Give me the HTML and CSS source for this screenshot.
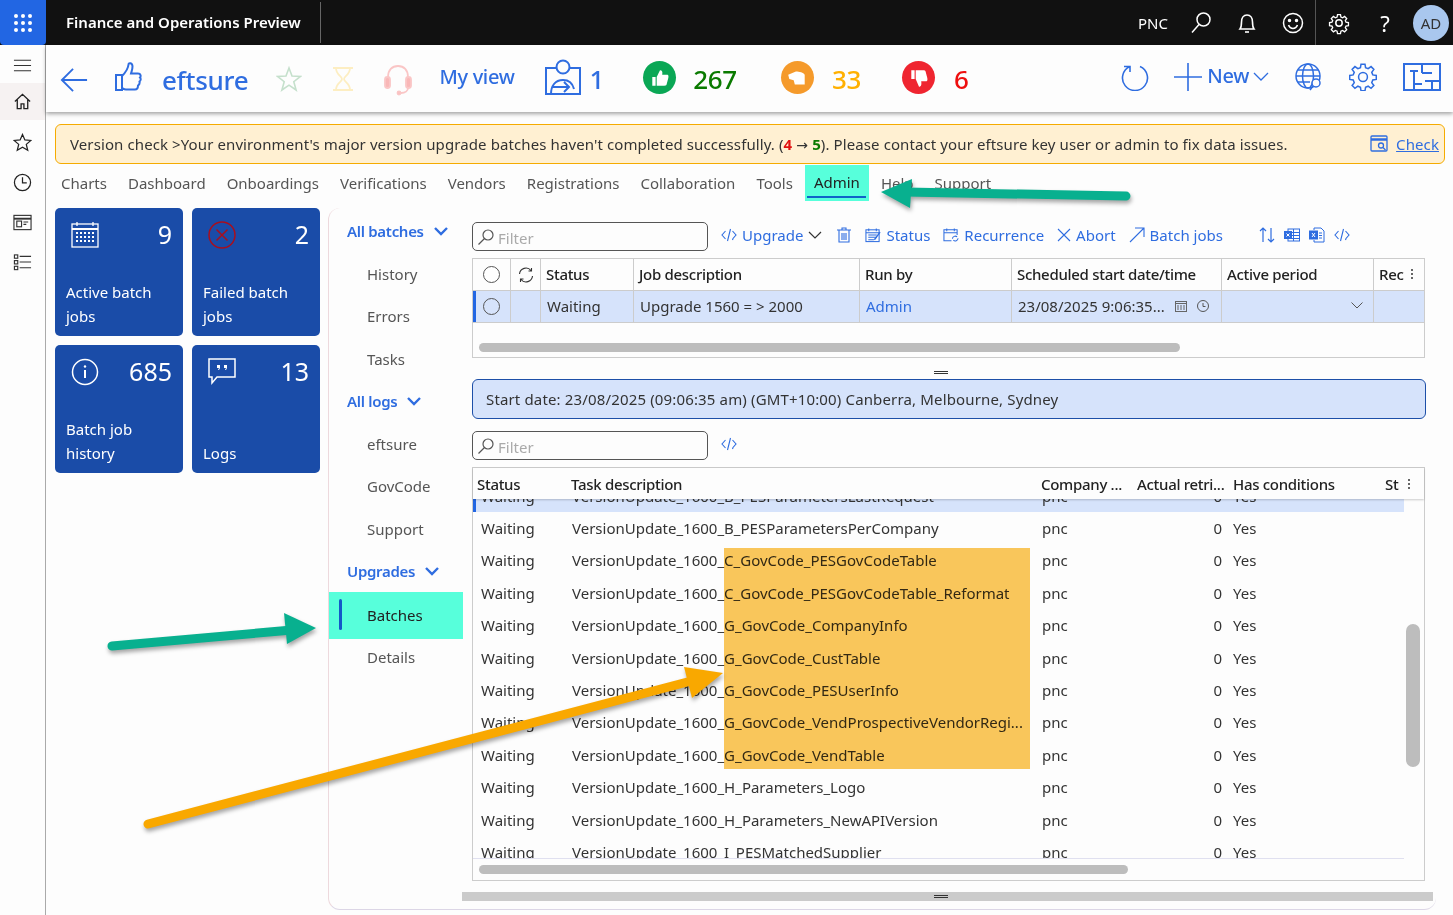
FILE: index.html
```html
<!DOCTYPE html>
<html>

	<head>
		<meta charset="UTF-8">
		<title>Finance and Operations Preview</title>
		<link rel="stylesheet" href="styles.css">
	</head>

	<body>
		<header class="topbar">
			<div class="waffle">
				<svg width="20" height="20" viewBox="0 0 20 20" fill="#fff"><circle cx="3" cy="3" r="2"/><circle cx="10" cy="3" r="2"/><circle cx="17" cy="3" r="2"/><circle cx="3" cy="10" r="2"/><circle cx="10" cy="10" r="2"/><circle cx="17" cy="10" r="2"/><circle cx="3" cy="17" r="2"/><circle cx="10" cy="17" r="2"/><circle cx="17" cy="17" r="2"/></svg>
			</div>
			<div class="app-title">Finance and Operations Preview</div>
			<div class="top-right">
				<span class="company">PNC</span>
				<svg class="top-icon" viewBox="0 0 24 24" fill="none" stroke="#fff" stroke-width="1.5"><circle cx="14.5" cy="8.5" r="6.5"/><path d="M10 13.5 3 21.5"/></svg>
				<svg class="top-icon" viewBox="0 0 24 24" fill="none" stroke="#fff" stroke-width="1.6"><path d="M5 18c1.500-2 1.500-4 1.500-7 0-4 2-7 5.500-7s5.500 3 5.500 7c0 3 0 5 1.500 7z"/><path d="M10 21h4"/></svg>
				<svg class="top-icon top-smile" viewBox="0 0 24 24" fill="none" stroke="#fff" stroke-width="1.5"><circle cx="12" cy="12" r="9.500"/><circle cx="8.500" cy="9.500" r="1" fill="#fff"/><circle cx="15.500" cy="9.500" r="1" fill="#fff"/><path d="M7.500 14c1 2.500 3 3.500 4.500 3.500s3.500-1 4.500-3.500"/></svg>
				<span class="top-sep"></span>
				<svg class="top-icon" viewBox="0 0 24 24" fill="none" stroke="#fff" stroke-width="1.5"><circle cx="12" cy="12" r="3.200"/><path d="M10.300 2.500h3.400l.5 2.800 1.900.8 2.300-1.600 2.400 2.400-1.600 2.300.8 1.900 2.800.5v3.400l-2.800.5-.8 1.900 1.600 2.300-2.400 2.400-2.300-1.600-1.900.8-.5 2.800h-3.400l-.5-2.800-1.900-.8-2.300 1.600-2.400-2.400 1.600-2.300-.8-1.900-2.800-.5v-3.400l2.800-.5.8-1.900-1.600-2.300 2.400-2.400 2.300 1.600 1.900-.8z" transform="translate(1.500 1.500) scale(.875)"/></svg>
				<span class="help">?</span>
				<span class="avatar">AD</span>
			</div>
		</header>

		<div class="shell">
			<aside class="rail">
				<svg class="rail-icon" viewBox="0 0 20 20" stroke="#333" stroke-width="1.200"><path d="M1 4.500h18M1 10h18M1 15.500h18"/></svg>
				<div class="rail-home">
					<svg class="rail-icon" viewBox="0 0 20 20" fill="none" stroke="#222" stroke-width="1.400"><path d="M2 10 10 2.500 18 10M4.500 8v9.500h4v-5h3v5h4V8"/></svg>
				</div>
				<svg class="rail-icon" viewBox="0 0 20 20" fill="none" stroke="#222" stroke-width="1.300"><path d="m10 1.500 2.500 5.800 6.300.6-4.800 4.100 1.500 6.200-5.500-3.300-5.500 3.300 1.500-6.200L1.200 7.900l6.300-.6z"/></svg>
				<svg class="rail-icon" viewBox="0 0 20 20" fill="none" stroke="#222" stroke-width="1.300"><circle cx="10" cy="10" r="8.500"/><path d="M10 4.500V10.500H14.500"/></svg>
				<svg class="rail-icon" viewBox="0 0 20 20" fill="none" stroke="#333" stroke-width="1.200"><rect x="1" y="2.500" width="18" height="15"/><path d="M1 6h18" stroke-width="2"/><rect x="4" y="8.500" width="5" height="6"/><path d="M11 9.500h5M11 12h3"/></svg>
				<svg class="rail-icon" viewBox="0 0 20 20" fill="none" stroke="#333" stroke-width="1.200"><rect x="1.500" y="2" width="3.500" height="3.500"/><rect x="1.500" y="8" width="3.500" height="3.500"/><rect x="1.500" y="14" width="3.500" height="3.500"/><path d="M7 3.500h12M7 9.500h12M7 15.500h12"/></svg>
			</aside>

			<main class="main">
				<div class="actionbar">
					<svg class="back" viewBox="0 0 30 28" fill="none" stroke="#2f6de0" stroke-width="2"><path d="M29 14H2M14 2 2 14l12 12"/></svg>
					<svg class="thumb" viewBox="0 0 28 30" fill="none" stroke="#2f6de0" stroke-width="2"><path d="M2 13h6v15H2zM8 14c3-3 6-6 6.500-11.500 0-2 4-2 4 2 0 3-1 5-1.500 7h7c3 0 3 3 2 4 1 1 1 3-.5 4 .5 2 0 3-1.500 4 0 2-1 4-3 4H12c-2 0-3-1-4-1.500"/></svg>
					<span class="brand">eftsure</span>
					<svg class="fav" viewBox="0 0 26 26" fill="none" stroke="#c5e0cc" stroke-width="1.600"><path d="m13 2 3 8 8.500.4-6.700 5.300 2.300 8.300-7.100-4.800L5.900 24l2.300-8.300-6.700-5.300L10 10z"/></svg>
					<svg class="hour" viewBox="0 0 22 26" fill="none" stroke="#fdeec2" stroke-width="1.800"><path d="M1 2h20M1 24h20M4 2c0 7 6 8 6 11s-6 4-6 11M18 2c0 7-6 8-6 11s6 4 6 11"/></svg>
					<svg class="head" viewBox="0 0 30 32" fill="none" stroke="#fac6c6" stroke-width="1.800"><path d="M5 16V13C5 6 9 2 15 2s10 4 10 11v3"/><rect x="2" y="13" width="5" height="11" rx="2.500" fill="#f9b7b7"/><rect x="23" y="13" width="5" height="11" rx="2.500" fill="#f9b7b7"/><path d="M25 24c0 3-3 5-7 5"/><circle cx="16" cy="29" r="1.500" fill="#f9b7b7"/></svg>
					<span class="myview">My view</span>
					<svg class="assign" viewBox="0 0 36 36" fill="none" stroke="#2f6de0" stroke-width="2"><rect x="1" y="9" width="34" height="26"/><circle cx="18" cy="8" r="6.500" fill="#fdfdfd"/><path d="M6 35c0-8 4-14 12-14s10 5 11 9M8 28h16m-5-5 5 5-5 5"/></svg>
					<span class="count count-blue">1</span>
					<span class="dot dot-green"><svg viewBox="0 0 20 20" fill="#fff"><path d="M3 9h3v8H3zM7 9l3-6c2 0 2.500 1.500 2 4h4.500c1.500 0 1.500 2 .5 5l-1 4c-.5 1-1 1-2 1H7z"/></svg></span>
					<span class="count count-green">267</span>
					<span class="dot dot-orange"><svg viewBox="0 0 20 20" fill="#fff"><path d="M2 7l7-3c3 0 7 1 8 3v9H8l-1-4-4-1z"/></svg></span>
					<span class="count count-orange">33</span>
					<span class="dot dot-red"><svg viewBox="0 0 20 20" fill="#fff"><path d="M3 3h3v8H3zM7 3v8l3 7c2 0 2.500-2 2-5h4.500c1.500 0 1.500-2 .5-5l-1-4c-.5-1-1-1-2-1z"/></svg></span>
					<span class="count count-red">6</span>
					<div class="action-right">
						<svg class="act-refresh" viewBox="0 0 28 28" fill="none" stroke="#2f6de0" stroke-width="1.600"><path d="M9 3.500a12.500 12.500 0 1 0 10 0M9 9V3.500H3"/></svg>
						<svg class="act-plus" viewBox="0 0 28 28" stroke="#2f6de0" stroke-width="1.600"><path d="M14 0v28M0 14h28"/></svg>
						<span class="new-label">New</span>
						<svg class="act-chev" viewBox="0 0 16 10" fill="none" stroke="#2f6de0" stroke-width="1.300"><path d="m1 1 7 7 7-7"/></svg>
						<svg class="act-globe" viewBox="0 0 28 28" fill="none" stroke="#2f6de0" stroke-width="1.500"><circle cx="13" cy="13" r="12"/><ellipse cx="13" cy="13" rx="5.500" ry="12"/><path d="M1 13h24M3 7h20M3 19h12"/><circle cx="21" cy="20" r="4" fill="#fdfdfd"/><path d="m18 23-3 4"/></svg>
						<svg class="act-gear" viewBox="0 0 24 24" fill="none" stroke="#2f6de0" stroke-width="1.300"><circle cx="12" cy="12" r="3.800"/><path d="M10.300 1h3.400l.5 3 2.200.9 2.500-1.800 2.400 2.400-1.800 2.500.9 2.200 3 .5v3.400l-3 .5-.9 2.200 1.800 2.500-2.400 2.400-2.500-1.800-2.200.9-.5 3h-3.400l-.5-3-2.200-.9-2.500 1.800-2.400-2.400 1.800-2.500-.9-2.200-3-.5v-3.400l3-.5.9-2.200-1.800-2.500 2.400-2.400 2.500 1.800 2.200-.9z"/></svg>
						<svg class="act-plan" viewBox="0 0 38 28" fill="none" stroke="#2f6de0" stroke-width="2"><rect x="1" y="1" width="36" height="26"/><path d="M7 8h8M11 8v19M19 1v9M19 10h10M22 18h15M29 18v9M19 21h-8" /></svg>
					</div>
				</div>

				<div class="banner">
					<span>Version check &gt;Your environment's major version upgrade batches haven't completed successfully. (<b class="v-red">4</b> <span class="v-arrow">→</span> <b class="v-green">5</b>). Please contact your eftsure key user or admin to fix data issues.</span>
					<span class="check">
						<svg width="18" height="18" viewBox="0 0 18 18" fill="none" stroke="#2f6de0" stroke-width="1.300"><rect x="1" y="1" width="16" height="15" rx="1"/><path d="M1 4.500h16" stroke-width="2.500"/><circle cx="11" cy="10.500" r="2.500"/><path d="m13 12.500 2.500 2.500"/></svg>
						<a class="check-link" href="javascript:;">Check</a>
					</span>
				</div>

				<nav class="tabs">
					<a href="javascript:;">Charts</a>
					<a href="javascript:;">Dashboard</a>
					<a href="javascript:;">Onboardings</a>
					<a href="javascript:;">Verifications</a>
					<a href="javascript:;">Vendors</a>
					<a href="javascript:;">Registrations</a>
					<a href="javascript:;">Collaboration</a>
					<a href="javascript:;">Tools</a>
					<a class="active" href="javascript:;">Admin</a>
					<a href="javascript:;">Help</a>
					<a href="javascript:;">Support</a>
				</nav>

				<div class="content">
					<div class="tiles">
						<div class="tile">
							<div class="tile-top">
								<svg class="tile-icon" viewBox="0 0 28 28" fill="none" stroke="#fff" stroke-width="1.300"><rect x="1" y="3" width="26" height="23"/><path d="M1 8h26" stroke-width="2"/><path d="M6 1v4M22 1v4"/><path d="M5 12h18M5 16h18M5 20h18" stroke-width="2" stroke-dasharray="2 2"/></svg>
								<span class="tile-num">9</span>
							</div>
							<div class="tile-label">Active batch jobs</div>
						</div>
						<div class="tile">
							<div class="tile-top">
								<svg class="tile-icon" viewBox="0 0 28 28" fill="none" stroke="#a80f1e" stroke-width="1.500"><circle cx="14" cy="14" r="13"/><path d="m8.500 8.500 11 11m0-11-11 11"/></svg>
								<span class="tile-num">2</span>
							</div>
							<div class="tile-label">Failed batch jobs</div>
						</div>
						<div class="tile">
							<div class="tile-top">
								<svg class="tile-icon" viewBox="0 0 28 28" fill="none" stroke="#fff" stroke-width="1.500"><circle cx="14" cy="14" r="12.500"/><path d="M14 12v8" stroke-width="2"/><circle cx="14" cy="8.500" r="1.200" fill="#fff" stroke="none"/></svg>
								<span class="tile-num">685</span>
							</div>
							<div class="tile-label">Batch job history</div>
						</div>
						<div class="tile">
							<div class="tile-top">
								<svg class="tile-icon" viewBox="0 0 28 28" fill="none" stroke="#fff" stroke-width="1.500"><path d="M1 1h26v18H9l-5 6v-6H1z"/><path d="M9 7h3v3l-1 2H10l1-2H9zM16 7h3v3l-1 2h-1l1-2h-2z" fill="#fff" stroke="none"/></svg>
								<span class="tile-num">13</span>
							</div>
							<div class="tile-label">Logs</div>
						</div>
					</div>

					<section class="panel">
						<ul class="side-nav">
							<li class="group">All batches <svg class="nav-chev" viewBox="0 0 14 9" fill="none" stroke="#2f6de0" stroke-width="2.400"><path d="m1 1 6 6 6-6"/></svg></li>
							<li>History</li>
							<li>Errors</li>
							<li>Tasks</li>
							<li class="group">All logs <svg class="nav-chev" viewBox="0 0 14 9" fill="none" stroke="#2f6de0" stroke-width="2.400"><path d="m1 1 6 6 6-6"/></svg></li>
							<li>eftsure</li>
							<li>GovCode</li>
							<li>Support</li>
							<li class="group">Upgrades <svg class="nav-chev" viewBox="0 0 14 9" fill="none" stroke="#2f6de0" stroke-width="2.400"><path d="m1 1 6 6 6-6"/></svg></li>
							<li class="current">Batches</li>
							<li>Details</li>
						</ul>

						<div class="work">
							<div class="toolbar">
								<div class="filter">
									<svg width="18" height="18" viewBox="0 0 18 18" fill="none" stroke="#555" stroke-width="1.200"><circle cx="11" cy="7" r="5"/><path d="m7.500 10.500-6 6"/></svg>
									<span>Filter</span>
								</div>
								<span class="tool tool-first"><svg class="code" viewBox="0 0 16 14" fill="none" stroke="#2f6de0" stroke-width="1.100"><path d="M4.500 3 1 7l3.500 4M9.500 1 6.500 13M11.500 3 15 7l-3 3.500-.5 1.500"/></svg>Upgrade<svg class="chev" viewBox="0 0 14 8" fill="none" stroke="#333" stroke-width="1.200"><path d="m1 1 6 6 6-6"/></svg></span>
								<svg class="tool-icon trash" viewBox="0 0 14 16" fill="none" stroke="#2f6de0" stroke-width="1.100"><path d="M0 3h14M5 3V1h4v2M2 3v12h10V3M5 6v7M7 6v7M9 6v7"/></svg>
								<span class="tool"><svg class="tool-icon" viewBox="0 0 17 16" fill="none" stroke="#2f6de0" stroke-width="1.100"><rect x="1" y="2.500" width="14" height="12.500"/><path d="M1 5.500h14M4 1v3M12 1v3M3.500 8h9M3.500 10.500h9M3.500 13h6"/><path d="m16 5-6 8" stroke-width="1.500"/></svg>Status</span>
								<span class="tool"><svg class="tool-icon" viewBox="0 0 17 16" fill="none" stroke="#2f6de0" stroke-width="1.100"><path d="M9 14H1V2.500h14V8M1 5.500h14M4 1v3M12 1v3"/><path d="M10 12a3 3 0 0 1 5-2m1 1.500a3 3 0 0 1-5 2"/></svg>Recurrence</span>
								<span class="tool"><svg class="tool-icon x" viewBox="0 0 14 14" stroke="#2f6de0" stroke-width="1.100"><path d="m1 1 12 12M13 1 1 13"/></svg>Abort</span>
								<span class="tool"><svg class="tool-icon" viewBox="0 0 16 16" fill="none" stroke="#2f6de0" stroke-width="1.100"><path d="M1 15 15 1M6 1h9v9"/></svg>Batch jobs</span>
								<span class="tool-right">
									<svg class="tool-icon" viewBox="0 0 16 16" fill="none" stroke="#2f6de0" stroke-width="1.200"><path d="M4 15V1M1 4l3-3 3 3M12 1v14M9 12l3 3 3-3"/></svg>
									<svg class="tool-icon" viewBox="0 0 16 14" fill="none" stroke="#2f6de0" stroke-width="1"><rect x="4" y="1" width="11.500" height="12"/><path d="M4 4.500h11.500M4 7.500h11.500M4 10.500h11.500M9.500 1v12"/><rect x=".5" y="3.500" width="7" height="7" fill="#2f6de0"/><path d="m2.500 5.500 3 3m0-3-3 3" stroke="#fff"/></svg>
									<svg class="tool-icon" viewBox="0 0 16 16" fill="none" stroke="#2f6de0" stroke-width="1"><path d="M5 3V1h7l3 3v11H5v-2M10 6h3M10 8.500h3M10 11h3"/><rect x=".5" y="4" width="8" height="8" fill="#2f6de0"/><path d="m3 6 3 4m0-4-3 4" stroke="#fff"/></svg>
									<svg class="code" viewBox="0 0 16 14" fill="none" stroke="#2f6de0" stroke-width="1.100"><path d="M4.500 3 1 7l3.500 4M9.500 1 6.500 13M11.500 3 15 7l-3 3.500-.5 1.500"/></svg>
								</span>
							</div>

							<div class="jobs">
								<div class="job-row job-head">
									<div class="job-cell cell-center"><span class="radio"></span></div>
									<div class="job-cell cell-center"><svg width="16" height="16" viewBox="0 0 16 16" fill="none" stroke="#333" stroke-width="1.100"><path d="M1.500 7A6.500 6.500 0 0 1 13 3.500M14.500 9A6.500 6.500 0 0 1 3 12.500M13.500 1v3h-3M2.500 15v-3h3"/></svg></div>
									<div class="job-cell">Status</div>
									<div class="job-cell">Job description</div>
									<div class="job-cell">Run by</div>
									<div class="job-cell">Scheduled start date/time</div>
									<div class="job-cell">Active period</div>
									<div class="job-cell cell-last"><span class="cut">Rec</span><span class="kebab"></span></div>
								</div>
								<div class="job-row job-data">
									<div class="job-cell cell-center"><span class="radio"></span></div>
									<div class="job-cell"></div>
									<div class="job-cell">Waiting</div>
									<div class="job-cell">Upgrade 1560 = &gt; 2000</div>
									<div class="job-cell job-link">Admin</div>
									<div class="job-cell cell-date">23/08/2025 9:06:35...
										<svg width="12" height="12" viewBox="0 0 12 12" fill="none" stroke="#666" stroke-width="1"><rect x=".5" y="1.500" width="11" height="10"/><path d="M.5 3.500h11M3 5v5M6 5v5M9 5v5"/></svg>
										<svg width="12" height="12" viewBox="0 0 12 12" fill="none" stroke="#555" stroke-width="1"><circle cx="6" cy="6" r="5.500"/><path d="M6 3v3.500h2.500"/></svg>
									</div>
									<div class="job-cell cell-select"><svg width="12" height="7" viewBox="0 0 12 7" fill="none" stroke="#555" stroke-width="1"><path d="m.5.500 5.500 5.500 5.500-5.500"/></svg></div>
									<div class="job-cell"></div>
								</div>
								<div class="hscroll hscroll-top"><span class="thumb-h"></span></div>
							</div>

							<div class="splitter"><span></span></div>

							<div class="infobox">Start date: 23/08/2025 (09:06:35 am) (GMT+10:00) Canberra, Melbourne, Sydney</div>

							<div class="toolbar toolbar-low">
								<div class="filter">
									<svg width="18" height="18" viewBox="0 0 18 18" fill="none" stroke="#555" stroke-width="1.200"><circle cx="11" cy="7" r="5"/><path d="m7.500 10.500-6 6"/></svg>
									<span>Filter</span>
								</div>
								<span class="tool tool-first"><svg class="code" viewBox="0 0 16 14" fill="none" stroke="#2f6de0" stroke-width="1.100"><path d="M4.500 3 1 7l3.500 4M9.500 1 6.500 13M11.500 3 15 7l-3 3.500-.5 1.500"/></svg></span>
							</div>

							<div class="tasks">
								<div class="task-head">
									<div class="th-status">Status</div>
									<div>Task description</div>
									<div>Company ...</div>
									<div>Actual retri...</div>
									<div>Has conditions</div>
									<div class="th-last"><span class="cut">St</span><span class="kebab"></span></div>
								</div>
								<div class="task-body">
									<div class="task-clip">
										<div class="task-list">
											<div class="task selected"><span>Waiting</span><span class="task-name">VersionUpdate_1600_B_PESParametersLastRequest</span><span>pnc</span><span class="num">0</span><span class="yes">Yes</span></div>
											<div class="task"><span>Waiting</span><span class="task-name">VersionUpdate_1600_B_PESParametersPerCompany</span><span>pnc</span><span class="num">0</span><span class="yes">Yes</span></div>
											<div class="task"><span>Waiting</span><span class="task-name">VersionUpdate_1600_C_GovCode_PESGovCodeTable</span><span>pnc</span><span class="num">0</span><span class="yes">Yes</span></div>
											<div class="task"><span>Waiting</span><span class="task-name">VersionUpdate_1600_C_GovCode_PESGovCodeTable_Reformat</span><span>pnc</span><span class="num">0</span><span class="yes">Yes</span></div>
											<div class="task"><span>Waiting</span><span class="task-name">VersionUpdate_1600_G_GovCode_CompanyInfo</span><span>pnc</span><span class="num">0</span><span class="yes">Yes</span></div>
											<div class="task"><span>Waiting</span><span class="task-name">VersionUpdate_1600_G_GovCode_CustTable</span><span>pnc</span><span class="num">0</span><span class="yes">Yes</span></div>
											<div class="task"><span>Waiting</span><span class="task-name">VersionUpdate_1600_G_GovCode_PESUserInfo</span><span>pnc</span><span class="num">0</span><span class="yes">Yes</span></div>
											<div class="task"><span>Waiting</span><span class="task-name">VersionUpdate_1600_G_GovCode_VendProspectiveVendorRegi...</span><span>pnc</span><span class="num">0</span><span class="yes">Yes</span></div>
											<div class="task"><span>Waiting</span><span class="task-name">VersionUpdate_1600_G_GovCode_VendTable</span><span>pnc</span><span class="num">0</span><span class="yes">Yes</span></div>
											<div class="task"><span>Waiting</span><span class="task-name">VersionUpdate_1600_H_Parameters_Logo</span><span>pnc</span><span class="num">0</span><span class="yes">Yes</span></div>
											<div class="task"><span>Waiting</span><span class="task-name">VersionUpdate_1600_H_Parameters_NewAPIVersion</span><span>pnc</span><span class="num">0</span><span class="yes">Yes</span></div>
											<div class="task"><span>Waiting</span><span class="task-name">VersionUpdate_1600_I_PESMatchedSupplier</span><span>pnc</span><span class="num">0</span><span class="yes">Yes</span></div>
										</div>
									</div>
									<div class="vscroll"><span class="thumb-v"></span></div>
								</div>
								<div class="hscroll hscroll-low"><span class="thumb-h"></span></div>
							</div>

							<div class="bottom-split"><span></span></div>
						</div>
					</section>
				</div>
			</main>
		</div>

		<!-- annotations drawn on top of the screenshot -->
		<div class="mark-orange"></div>
		<svg class="arrows" width="1453" height="915" viewBox="0 0 1453 915">
			<g class="arrow-teal">
				<path d="M1126 196 905 192" fill="none" stroke="#08b08f" stroke-width="9" stroke-linecap="round"/>
				<path d="M881 192 912 179 910 208z" fill="#08b08f"/>
			</g>
			<g class="arrow-teal">
				<path d="M112 646 292 630" fill="none" stroke="#08b08f" stroke-width="9" stroke-linecap="round"/>
				<path d="M316 628 284 613 287 644z" fill="#08b08f"/>
			</g>
			<g class="arrow-orange">
				<path d="M148 824 695 680" fill="none" stroke="#f9a800" stroke-width="9" stroke-linecap="round"/>
				<path d="M723 673 684 667 692 698z" fill="#f9a800"/>
			</g>
		</svg>
	</body>

</html>
```
FILE: styles.css
```css
html,
body {
	width: 100%;
	height: 100%;
	margin: 0;
	overflow: hidden;
}

body {
	background-color: #fdfdfd;
	font: 15px/20px "Noto Sans", "Open Sans", sans-serif;
	color: #333;
}

ul,
li {
	margin: 0;
	padding: 0;
	list-style: none;
}

a {
	text-decoration: none;
	color: inherit;
}

svg {
	display: block;
	flex: none;
}

/* top black bar */
.topbar {
	height: 45px;
	background-color: #111;
	display: flex;
	align-items: center;
	color: #fff;
}

.waffle {
	width: 46px;
	height: 45px;
	background-color: #2266e3;
	border-radius: 0 0 4px 4px;
	display: flex;
	align-items: center;
	justify-content: center;
}

.app-title {
	width: 254px;
	height: 41px;
	line-height: 41px;
	padding-left: 20px;
	border-right: 1px solid #666;
	font-weight: 600;
	font-size: 15px;
	white-space: nowrap;
}

.top-right {
	margin-left: auto;
	display: flex;
	align-items: center;
	height: 45px;
}

.company {
	font-size: 15px;
	margin-right: 21px;
}

.top-icon {
	width: 24px;
	height: 24px;
	margin-right: 22px;
}

.top-smile {
	margin-right: 10px;
}

.top-sep {
	width: 1px;
	height: 45px;
	background-color: #555;
	margin: 0 11px 0 0;
}

.help {
	font-size: 22px;
	width: 24px;
	text-align: center;
	margin-right: 16px;
	margin-left: 0;
}

.avatar {
	width: 36px;
	height: 36px;
	border-radius: 50%;
	background-color: #a9c7ee;
	color: #333;
	font-size: 15px;
	line-height: 36px;
	text-align: center;
	margin-right: 4px;
}

/* shell */
.shell {
	display: flex;
	height: 870px;
}

.rail {
	width: 45px;
	border-right: 1px solid #aaa;
	display: flex;
	flex-direction: column;
	align-items: center;
	padding-top: 11px;
	flex: none;
}

.rail-icon {
	width: 19px;
	height: 19px;
	margin-bottom: 21px;
}

.rail-home {
	width: 45px;
	height: 37px;
	background-color: #f6f2f2;
	display: flex;
	align-items: center;
	justify-content: center;
	margin: -13px 0 13px;
}

.rail-home .rail-icon {
	margin: 0;
}

.main {
	flex: 1;
	min-width: 0;
}

/* action bar */
.actionbar {
	height: 67px;
	display: flex;
	align-items: center;
	padding-left: 14px;
	box-shadow: 0 2px 4px rgba(0, 0, 0, 0.35);
	color: #2f6de0;
	white-space: nowrap;
	letter-spacing: -0.3px;
}

.back {
	width: 28px;
	height: 28px;
	margin-top: 3px;
}

.thumb {
	width: 28px;
	height: 30px;
	margin: -3px 0 0 26px;
}

.brand {
	font-size: 26px;
	font-weight: 500;
	margin-left: 20px;
	line-height: 40px;
	margin-top: 2px;
}

.fav {
	width: 26px;
	height: 26px;
	margin-left: 28px;
}

.hour {
	width: 22px;
	height: 26px;
	margin-left: 30px;
}

.head {
	width: 30px;
	height: 32px;
	margin: 3px 0 0 29px;
}

.myview {
	font-size: 20px;
	font-weight: 500;
	margin-left: 26px;
	margin-top: -3px;
}

.assign {
	width: 36px;
	height: 36px;
	margin: -3px 0 0 30px;
}

.count {
	font-size: 26px;
	font-weight: 500;
	line-height: 36px;
	margin-top: 1px;
}

.count-blue {
	margin-left: 9px;
}

.count-green {
	color: #0a7a00;
	margin-left: 17px;
}

.count-orange {
	color: #ffb000;
	margin-left: 18px;
}

.count-red {
	color: #ee0f0f;
	margin-left: 19px;
}

.dot {
	width: 33px;
	height: 33px;
	border-radius: 50%;
	display: flex;
	align-items: center;
	justify-content: center;
	margin-left: 41px;
	margin-top: -2px;
}

.dot svg {
	width: 22px;
	height: 22px;
}

.dot-green {
	background-color: #0aa755;
	margin-left: 39px;
}

.dot-orange {
	background-color: #f59a2b;
	margin-left: 44px;
}

.dot-red {
	background-color: #ef2530;
}

.action-right {
	margin-left: auto;
	display: flex;
	align-items: center;
	padding-right: 12px;
	margin-top: -4px;
}

.act-refresh {
	width: 28px;
	height: 28px;
}

.act-plus {
	width: 28px;
	height: 28px;
	margin-left: 25px;
}

.new-label {
	font-size: 20px;
	font-weight: 500;
	margin-left: 5px;
	margin-top: -1px;
}

.act-chev {
	width: 16px;
	height: 10px;
	margin-left: 4px;
}

.act-globe {
	width: 28px;
	height: 28px;
	margin-left: 26px;
}

.act-gear {
	width: 28px;
	height: 28px;
	margin-left: 26px;
}

.act-plan {
	width: 38px;
	height: 28px;
	margin-left: 26px;
}

/* version banner */
.banner {
	height: 38px;
	margin: 12px 8px 0 9px;
	padding: 0 5px 0 14px;
	background-color: #fff0d2;
	border: 1px solid #f5ab00;
	border-radius: 6px;
	display: flex;
	align-items: center;
	justify-content: space-between;
	white-space: nowrap;
	letter-spacing: 0.1px;
}

.v-red {
	color: #e01010;
}

.v-green {
	color: #0a7a00;
}

.v-arrow {
	font-family: "DejaVu Sans", sans-serif;
	font-size: 14px;
}

.check {
	display: flex;
	align-items: center;
	gap: 8px;
}

.check-link {
	color: #2f6de0;
	text-decoration: underline;
}

/* tabs */
.tabs {
	height: 36px;
	margin: 1px 0 0 9px;
	padding-left: 6px;
	display: flex;
	gap: 21px;
	align-items: center;
	color: #555;
}

.tabs a {
	white-space: nowrap;
	line-height: 34px;
	position: relative;
}

.tabs .active {
	background-color: #57ffdb;
	color: #222;
	padding: 0 9px 2px;
	margin: 0 -9px;
}

.tabs .active:after {
	content: "";
	position: absolute;
	left: 2px;
	right: 3px;
	bottom: 3px;
	height: 2px;
	background-color: #0f62c8;
}

/* tiles + panel */
.content {
	display: flex;
	gap: 8px;
	margin: 7px 0 0 9px;
}

.tiles {
	width: 265px;
	display: grid;
	grid-template-columns: 128px 128px;
	grid-auto-rows: 128px;
	gap: 9px;
	align-content: start;
	flex: none;
}

.tile {
	background-color: #1a4ca8;
	border-radius: 5px;
	color: #fff;
	padding: 13px 11px 8px;
	display: flex;
	flex-direction: column;
	justify-content: space-between;
	box-sizing: border-box;
}

.tile-top {
	display: flex;
	justify-content: space-between;
	align-items: flex-start;
}

.tile-icon {
	width: 28px;
	height: 28px;
	margin-left: 5px;
	margin-top: 0;
}

.tile-num {
	font-size: 25px;
	line-height: 26px;
}

.tile-label {
	line-height: 24px;
	width: 100px;
}

.panel {
	width: 1108px;
	height: 702px;
	box-sizing: border-box;
	border-left: 1px solid #edd9dd;
	border-bottom: 1px solid #dcd6e6;
	border-radius: 12px;
	display: flex;
}

.side-nav {
	width: 134px;
	flex: none;
	color: #555;
}

.side-nav li {
	height: 42.500px;
	line-height: 42.500px;
	padding-left: 38px;
	white-space: nowrap;
	position: relative;
}

.side-nav .group {
	padding-left: 18px;
	color: #2f6de0;
	font-weight: 600;
	letter-spacing: -0.3px;
	display: flex;
	align-items: center;
	gap: 10px;
}

.side-nav li:first-child {
	margin-top: 2px;
}

.nav-chev {
	width: 14px;
	height: 9px;
}

.side-nav .current {
	background-color: #57ffdb;
	color: #222;
	height: 47px;
	line-height: 47px;
	margin-top: -1px;
	margin-bottom: -3px;
}

.side-nav .current:before {
	content: "";
	position: absolute;
	left: 10px;
	top: 7px;
	width: 3px;
	height: 31px;
	background-color: #1458c8;
	border-radius: 2px;
}

/* right side */
.work {
	flex: 1;
	min-width: 0;
	padding: 14px 0 0 9px;
}

.toolbar {
	height: 29px;
	display: flex;
	align-items: center;
	color: #2f6de0;
	white-space: nowrap;
}

.filter {
	width: 236px;
	height: 29px;
	box-sizing: border-box;
	border: 1px solid #555;
	border-radius: 5px;
	display: flex;
	align-items: center;
	gap: 3px;
	padding: 0 4px;
	color: #aaa;
	flex: none;
}

.filter span {
	padding-top: 3px;
}

.tool {
	display: inline-flex;
	align-items: center;
	gap: 5px;
	margin-left: 13px;
	padding-bottom: 3px;
}

.tool-first {
	margin-left: 13px;
}

.code {
	width: 16px;
	height: 14px;
}

.chev {
	width: 14px;
	height: 8px;
}

.tool-icon {
	width: 16px;
	height: 16px;
}

.trash {
	margin-left: 14px;
	margin-bottom: 3px;
}

.x {
	width: 14px;
	height: 14px;
}

.tool-right {
	display: inline-flex;
	gap: 9px;
	align-items: center;
	margin-left: 36px;
	padding-bottom: 3px;
}

/* job table */
.jobs {
	margin-top: 7px;
	width: 953px;
	height: 100px;
	box-sizing: border-box;
	border: 1px solid #ccc;
}

.job-row {
	display: grid;
	grid-template-columns: 38px 30px 93px 226px 152px 210px 152px 1fr;
}

.job-head {
	height: 31px;
	font-weight: 500;
	color: #222;
	letter-spacing: -0.3px;
}

.job-data {
	height: 33px;
	background-color: #d6e3fb;
	box-shadow: inset 3px 0 0 #2266e3;
	border-top: 1px solid #ccc;
	border-bottom: 1px solid #ccc;
	box-sizing: border-box;
}

.job-cell {
	border-right: 1px solid #ccc;
	padding: 0 5px 2px;
	display: flex;
	align-items: center;
	white-space: nowrap;
	overflow: hidden;
	min-width: 0;
}

.job-data .job-cell {
	padding-left: 6px;
}

.job-cell:last-child {
	border-right: 0;
}

.job-row .cell-center {
	justify-content: center;
	padding: 0;
}

.cell-date {
	gap: 10px;
}

.job-row .cell-select {
	justify-content: flex-end;
	padding-right: 10px;
}

.cell-last {
	justify-content: space-between;
	padding-right: 11px;
	gap: 2px;
}

.job-link {
	color: #2f6de0;
}

.radio {
	width: 15px;
	height: 15px;
	border: 1px solid #555;
	border-radius: 50%;
	background-color: #fff;
}

.job-data .radio {
	background-color: transparent;
}

.cut {
	white-space: nowrap;
}

.kebab {
	width: 2px;
	height: 2px;
	border-radius: 50%;
	background-color: #333;
	box-shadow: 0 -4px 0 #333, 0 4px 0 #333;
	flex: none;
}

.hscroll {
	padding: 0 6px;
}

.hscroll-top {
	padding-top: 20px;
}

.hscroll-top .thumb-h {
	width: 701px;
}

.hscroll-low {
	padding-top: 7px;
}

.hscroll-low .thumb-h {
	width: 649px;
}

.thumb-h {
	display: block;
	height: 9px;
	background-color: #bdbdbd;
	border-radius: 5px;
}

.splitter {
	height: 21px;
	width: 953px;
	display: flex;
	justify-content: center;
	align-items: flex-end;
	padding: 0 15px 5px 0;
	box-sizing: border-box;
}

.splitter span,
.bottom-split span {
	display: block;
	width: 14px;
	height: 3px;
	border-top: 1px solid #333;
	border-bottom: 1px solid #333;
	box-sizing: border-box;
}

.infobox {
	width: 954px;
	height: 40px;
	box-sizing: border-box;
	line-height: 38px;
	padding-left: 13px;
	background-color: #d6e3fb;
	border: 1px solid #1d4fa8;
	border-radius: 6px;
	letter-spacing: 0.15px;
}

.toolbar-low {
	margin-top: 12px;
}

/* task table */
.tasks {
	margin-top: 7px;
	width: 953px;
	height: 414px;
	box-sizing: border-box;
	border: 1px solid #ccc;
}

.task-head {
	height: 31px;
	display: grid;
	grid-template-columns: 98px 470px 96px 96px 152px 1fr;
	align-items: center;
	font-weight: 500;
	color: #222;
	white-space: nowrap;
	box-shadow: 0 1px 2px rgba(0, 0, 0, 0.2);
	position: relative;
	background-color: #fdfdfd;
	letter-spacing: -0.3px;
}

.th-status {
	padding-left: 4px;
}

.th-last {
	display: flex;
	align-items: center;
	gap: 10px;
}

.task-body {
	display: flex;
	height: 359px;
}

.task-clip {
	width: 931px;
	height: 360px;
	overflow: hidden;
	border-bottom: 1px solid #e0e0f0;
	box-sizing: border-box;
	flex: none;
}

.task-list {
	margin-top: -19.600px;
}

.task {
	height: 32.400px;
	display: grid;
	grid-template-columns: 99px 470px 95px 85px 120px;
	align-items: center;
	white-space: nowrap;
}

.task > span:first-child {
	padding-left: 8px;
}

.task.selected {
	background-color: #d6e3fb;
	box-shadow: inset 3px 0 0 #2266e3;
}

.task-name {
	overflow: hidden;
	padding-right: 2px;
}

.num {
	text-align: right;
}

.yes {
	padding-left: 11px;
}

.vscroll {
	flex: 1;
	padding: 125px 0 0 2px;
}

.thumb-v {
	display: block;
	width: 14px;
	height: 143px;
	background-color: #bdbdbd;
	border-radius: 7px;
}

.bottom-split {
	margin: 11px 0 0 -10px;
	width: 971px;
	height: 9px;
	background-color: #cbcbcb;
	display: flex;
	justify-content: center;
	align-items: center;
	padding-right: 14px;
	box-sizing: border-box;
}

/* annotations */
.mark-orange {
	position: absolute;
	left: 724px;
	top: 548px;
	width: 306px;
	height: 221px;
	background-color: #fbc85c;
	mix-blend-mode: multiply;
}

.arrows {
	position: absolute;
	left: 0;
	top: 0;
	pointer-events: none;
}

.arrow-teal,
.arrow-orange {
	filter: drop-shadow(1px 3px 2px rgba(0, 0, 0, 0.35));
}
```
